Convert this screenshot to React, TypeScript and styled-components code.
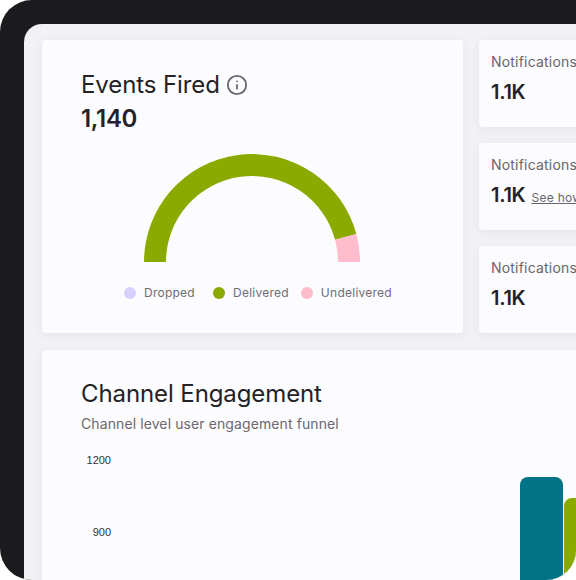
import React from "react";
import styled, { createGlobalStyle } from "styled-components";
import { Info } from "lucide-react";

const Global = createGlobalStyle`
  html, body { margin: 0; padding: 0; background: #fff; }
  * { box-sizing: border-box; }
  body { font-family: Inter, "Liberation Sans", sans-serif; }
`;

const Frame = styled.div`
  width: 576px;
  height: 580px;
  overflow: hidden;
  background: #1b1a1d;
  border-radius: 32px 0 30px 32px;
  padding: 24px 0 0 24px;
`;

const Panel = styled.main`
  width: 680px;
  height: 640px;
  background: #f2f1f3;
  border-radius: 18px 0 0 0;
  padding: 16px 0 0 18px;
  display: flex;
  flex-direction: column;
  gap: 17px;
`;

const TopRow = styled.div`
  display: flex;
  gap: 16px;
  align-items: stretch;
`;

const Card = styled.section`
  background: #fcfbfd;
  border-radius: 4px;
  box-shadow: 0 2px 10px rgba(60, 55, 70, 0.07);
  flex-shrink: 0;
`;

const GaugeCard = styled(Card)`
  width: 421px;
  height: 293px;
  padding: 30px 39px 0;
  display: flex;
  flex-direction: column;
`;

const TitleRow = styled.div`
  display: flex;
  align-items: center;
  gap: 6px;
  height: 29px;
  color: #6b696f;
`;

const GaugeTitle = styled.h2`
  margin: 0;
  font-size: 24px;
  line-height: 29px;
  font-weight: 400;
  letter-spacing: -0.1px;
  color: #232226;
`;

const Total = styled.div`
  margin-top: 4px;
  font-size: 24px;
  line-height: 32px;
  font-weight: 600;
  letter-spacing: -0.3px;
  color: #232226;
`;

const GaugeWrap = styled.div`
  margin: 18px 0 0 63px;
  width: 216px;
  height: 109px;
`;

const Legend = styled.ul`
  list-style: none;
  margin: 23px 0 0 43px;
  padding: 0;
  display: flex;
  align-items: center;
  font-size: 12px;
  line-height: 16px;
  letter-spacing: 0.25px;
  color: #6f6d74;
`;

const LegendItem = styled.li<{ $gap: number }>`
  display: flex;
  align-items: center;
  gap: 8px;
  margin-right: ${(p) => p.$gap}px;
`;

const Dot = styled.span<{ $color: string }>`
  width: 12px;
  height: 12px;
  border-radius: 50%;
  background: ${(p) => p.$color};
`;

const StatColumn = styled.div`
  display: flex;
  flex-direction: column;
  gap: 16px;
`;

const StatCard = styled(Card)`
  width: 200px;
  height: 87px;
  padding: 13px 12px 0;
`;

const StatLabel = styled.div`
  font-size: 14px;
  line-height: 18px;
  letter-spacing: 0.2px;
  white-space: nowrap;
  color: #68666c;
`;

const StatValueRow = styled.div`
  margin-top: 8px;
  display: flex;
  align-items: baseline;
  gap: 6px;
  white-space: nowrap;
`;

const StatValue = styled.span`
  font-size: 20px;
  line-height: 26px;
  font-weight: 600;
  letter-spacing: -0.3px;
  color: #232226;
`;

const SeeHow = styled.a`
  font-size: 12px;
  letter-spacing: 0.3px;
  color: #68666c;
  text-decoration: underline;
`;

const ChannelCard = styled(Card)`
  width: 640px;
  height: 300px;
  padding: 29px 39px 0;
`;

const ChannelTitle = styled.h2`
  margin: 0;
  font-size: 24px;
  line-height: 29px;
  font-weight: 400;
  letter-spacing: -0.1px;
  color: #232226;
`;

const Subtitle = styled.p`
  margin: 7px 0 0;
  font-size: 14px;
  line-height: 18px;
  letter-spacing: 0.1px;
  color: #6b696f;
`;

const Chart = styled.div`
  margin-top: 20px;
  display: flex;
`;

const YAxis = styled.div`
  width: 30px;
  display: flex;
  flex-direction: column;
  gap: 58px;
  align-items: flex-end;
  font-family: "Liberation Sans", Arial, sans-serif;
  font-size: 11px;
  line-height: 14px;
  color: #333236;
`;

const Plot = styled.div`
  height: 240px;
  margin-left: 409px;
  display: flex;
  align-items: flex-end;
  gap: 1px;
`;

const Bar = styled.div<{ $color: string; $height: number }>`
  width: 43px;
  height: ${(p) => p.$height}px;
  background: ${(p) => p.$color};
  border-radius: 8px 8px 0 0;
`;

const cx = 108;
const cy = 109;
const outer = 108;
const inner = 86;

function point(r: number, deg: number) {
  const a = (deg * Math.PI) / 180;
  return `${(cx + r * Math.cos(a)).toFixed(2)} ${(cy - r * Math.sin(a)).toFixed(2)}`;
}

function arc(from: number, to: number) {
  return `M${point(outer, from)} A${outer} ${outer} 0 0 1 ${point(outer, to)} L${point(inner, to)} A${inner} ${inner} 0 0 0 ${point(inner, from)} Z`;
}

const legend = [
  { label: "Dropped", color: "#d6d0ff", gap: 18 },
  { label: "Delivered", color: "#8aaa00", gap: 12 },
  { label: "Undelivered", color: "#ffbccd", gap: 0 },
];

export default function App() {
  return (
    <>
      <Global />
      <Frame>
        <Panel>
          <TopRow>
            <GaugeCard>
              <TitleRow>
                <GaugeTitle>Events Fired</GaugeTitle>
                <Info size={22} strokeWidth={2} />
              </TitleRow>
              <Total>1,140</Total>
              <GaugeWrap>
                <svg width="216" height="109" viewBox="0 0 216 109">
                  <path d={arc(180, 15)} fill="#8aaa00" />
                  <path d={arc(15, 0)} fill="#ffbccd" />
                </svg>
              </GaugeWrap>
              <Legend>
                {legend.map((l) => (
                  <LegendItem key={l.label} $gap={l.gap}>
                    <Dot $color={l.color} />
                    {l.label}
                  </LegendItem>
                ))}
              </Legend>
            </GaugeCard>
            <StatColumn>
              <StatCard>
                <StatLabel>Notifications Sent</StatLabel>
                <StatValueRow>
                  <StatValue>1.1K</StatValue>
                </StatValueRow>
              </StatCard>
              <StatCard>
                <StatLabel>Notifications Clicked</StatLabel>
                <StatValueRow>
                  <StatValue>1.1K</StatValue>
                  <SeeHow>See how</SeeHow>
                </StatValueRow>
              </StatCard>
              <StatCard>
                <StatLabel>Notifications Opened</StatLabel>
                <StatValueRow>
                  <StatValue>1.1K</StatValue>
                </StatValueRow>
              </StatCard>
            </StatColumn>
          </TopRow>
          <ChannelCard>
            <ChannelTitle>Channel Engagement</ChannelTitle>
            <Subtitle>Channel level user engagement funnel</Subtitle>
            <Chart>
              <YAxis>
                <span>1200</span>
                <span>900</span>
              </YAxis>
              <Plot>
                <Bar $color="#007386" $height={216} />
                <Bar $color="#8aaa00" $height={195} />
              </Plot>
            </Chart>
          </ChannelCard>
        </Panel>
      </Frame>
    </>
  );
}
